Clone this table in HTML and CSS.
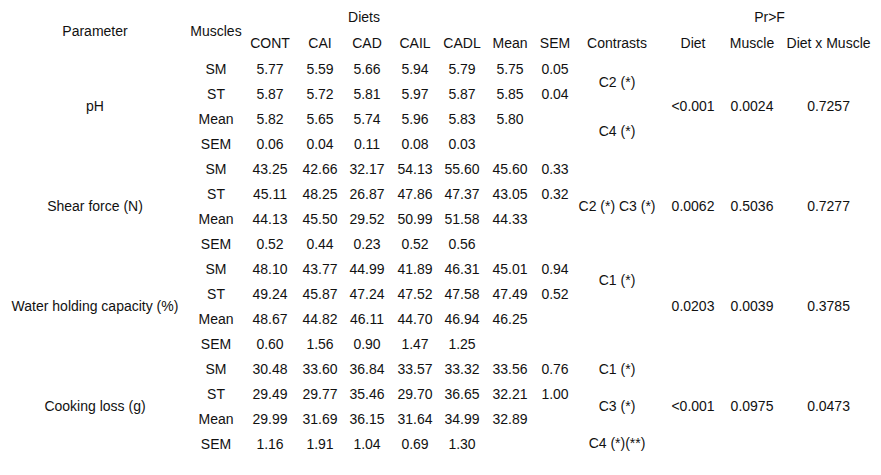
FILE: index.html
```html
<!DOCTYPE html>
<html lang="en">
<head>
<meta charset="utf-8">
<title>Meat quality table</title>
<link rel="stylesheet" href="styles.css">
</head>
<body>
<table class="results">
  <colgroup>
    <col class="c-param"><col class="c-muscle"><col class="c-cont"><col class="c-cai"><col class="c-cad"><col class="c-cail"><col class="c-cadl"><col class="c-mean"><col class="c-sem"><col class="c-contr"><col class="c-diet"><col class="c-mus"><col class="c-dxm">
  </colgroup>
  <thead>
    <tr class="h1">
      <th rowspan="2" class="hp">Parameter</th>
      <th rowspan="2" class="hp">Muscles</th>
      <th colspan="5">Diets</th>
      <th></th><th></th><th></th>
      <th colspan="3" class="prf">Pr&gt;F</th>
    </tr>
    <tr class="h2">
      <th>CONT</th><th>CAI</th><th>CAD</th><th>CAIL</th><th>CADL</th><th>Mean</th><th>SEM</th><th>Contrasts</th><th>Diet</th><th>Muscle</th><th>Diet x Muscle</th>
    </tr>
  </thead>
  <tbody>
    <tr>
      <td rowspan="4">pH</td><td>SM</td><td>5.77</td><td>5.59</td><td>5.66</td><td>5.94</td><td>5.79</td><td>5.75</td><td>0.05</td>
      <td rowspan="4"><div class="stack stack-ph"><span>C2 (*)</span><span>C4 (*)</span></div></td>
      <td rowspan="4">&lt;0.001</td><td rowspan="4">0.0024</td><td rowspan="4">0.7257</td>
    </tr>
    <tr><td>ST</td><td>5.87</td><td>5.72</td><td>5.81</td><td>5.97</td><td>5.87</td><td>5.85</td><td>0.04</td></tr>
    <tr><td>Mean</td><td>5.82</td><td>5.65</td><td>5.74</td><td>5.96</td><td>5.83</td><td>5.80</td><td></td></tr>
    <tr><td>SEM</td><td>0.06</td><td>0.04</td><td>0.11</td><td>0.08</td><td>0.03</td><td></td><td></td></tr>

    <tr>
      <td rowspan="4">Shear force (N)</td><td>SM</td><td>43.25</td><td>42.66</td><td>32.17</td><td>54.13</td><td>55.60</td><td>45.60</td><td>0.33</td>
      <td rowspan="4">C2 (*) C3 (*)</td>
      <td rowspan="4">0.0062</td><td rowspan="4">0.5036</td><td rowspan="4">0.7277</td>
    </tr>
    <tr><td>ST</td><td>45.11</td><td>48.25</td><td>26.87</td><td>47.86</td><td>47.37</td><td>43.05</td><td>0.32</td></tr>
    <tr><td>Mean</td><td>44.13</td><td>45.50</td><td>29.52</td><td>50.99</td><td>51.58</td><td>44.33</td><td></td></tr>
    <tr><td>SEM</td><td>0.52</td><td>0.44</td><td>0.23</td><td>0.52</td><td>0.56</td><td></td><td></td></tr>

    <tr>
      <td rowspan="4">Water holding capacity (%)</td><td>SM</td><td>48.10</td><td>43.77</td><td>44.99</td><td>41.89</td><td>46.31</td><td>45.01</td><td>0.94</td>
      <td rowspan="4"><div class="stack stack-whc"><span>C1 (*)</span></div></td>
      <td rowspan="4">0.0203</td><td rowspan="4">0.0039</td><td rowspan="4">0.3785</td>
    </tr>
    <tr><td>ST</td><td>49.24</td><td>45.87</td><td>47.24</td><td>47.52</td><td>47.58</td><td>47.49</td><td>0.52</td></tr>
    <tr><td>Mean</td><td>48.67</td><td>44.82</td><td>46.11</td><td>44.70</td><td>46.94</td><td>46.25</td><td></td></tr>
    <tr><td>SEM</td><td>0.60</td><td>1.56</td><td>0.90</td><td>1.47</td><td>1.25</td><td></td><td></td></tr>

    <tr>
      <td rowspan="4">Cooking loss (g)</td><td>SM</td><td>30.48</td><td>33.60</td><td>36.84</td><td>33.57</td><td>33.32</td><td>33.56</td><td>0.76</td>
      <td rowspan="4"><div class="stack stack-cl"><span>C1 (*)</span><span>C3 (*)</span><span>C4 (*)(**)</span></div></td>
      <td rowspan="4">&lt;0.001</td><td rowspan="4">0.0975</td><td rowspan="4">0.0473</td>
    </tr>
    <tr><td>ST</td><td>29.49</td><td>29.77</td><td>35.46</td><td>29.70</td><td>36.65</td><td>32.21</td><td>1.00</td></tr>
    <tr><td>Mean</td><td>29.99</td><td>31.69</td><td>36.15</td><td>31.64</td><td>34.99</td><td>32.89</td><td></td></tr>
    <tr><td>SEM</td><td>1.16</td><td>1.91</td><td>1.04</td><td>0.69</td><td>1.30</td><td></td><td></td></tr>
  </tbody>
</table>
</body>
</html>
```

FILE: styles.css
```css
html, body {
  margin: 0;
  padding: 0;
  background: #ffffff;
}

body {
  font-family: "Liberation Sans", Arial, sans-serif;
  font-size: 14px;
  color: #111111;
}

.results {
  table-layout: fixed;
  border-collapse: collapse;
  border-spacing: 0;
  width: 881px;
  margin-top: 5px;
}

.results th,
.results td {
  padding: 0;
  text-align: center;
  vertical-align: middle;
  white-space: nowrap;
  font-weight: normal;
  line-height: 20px;
}

.c-param { width: 190px; }
.c-muscle { width: 52px; }
.c-cont { width: 56px; }
.c-cai { width: 44px; }
.c-cad { width: 50px; }
.c-cail { width: 46px; }
.c-cadl { width: 48px; }
.c-mean { width: 48px; }
.c-sem { width: 42px; }
.c-contr { width: 82px; }
.c-diet { width: 70px; }
.c-mus { width: 48px; }
.c-dxm { width: 105px; }

.h1 { height: 24px; }
.h2 { height: 27px; }
.hp { padding-top: 2px; }
.prf { padding-right: 9px; }

.results tbody tr { height: 25px; }

.stack {
  display: flex;
  flex-direction: column;
  justify-content: space-between;
  align-items: center;
}

.stack-ph { height: 69px; }
.stack-whc { height: 72px; justify-content: flex-start; }
.stack-cl { height: 94px; }
```
